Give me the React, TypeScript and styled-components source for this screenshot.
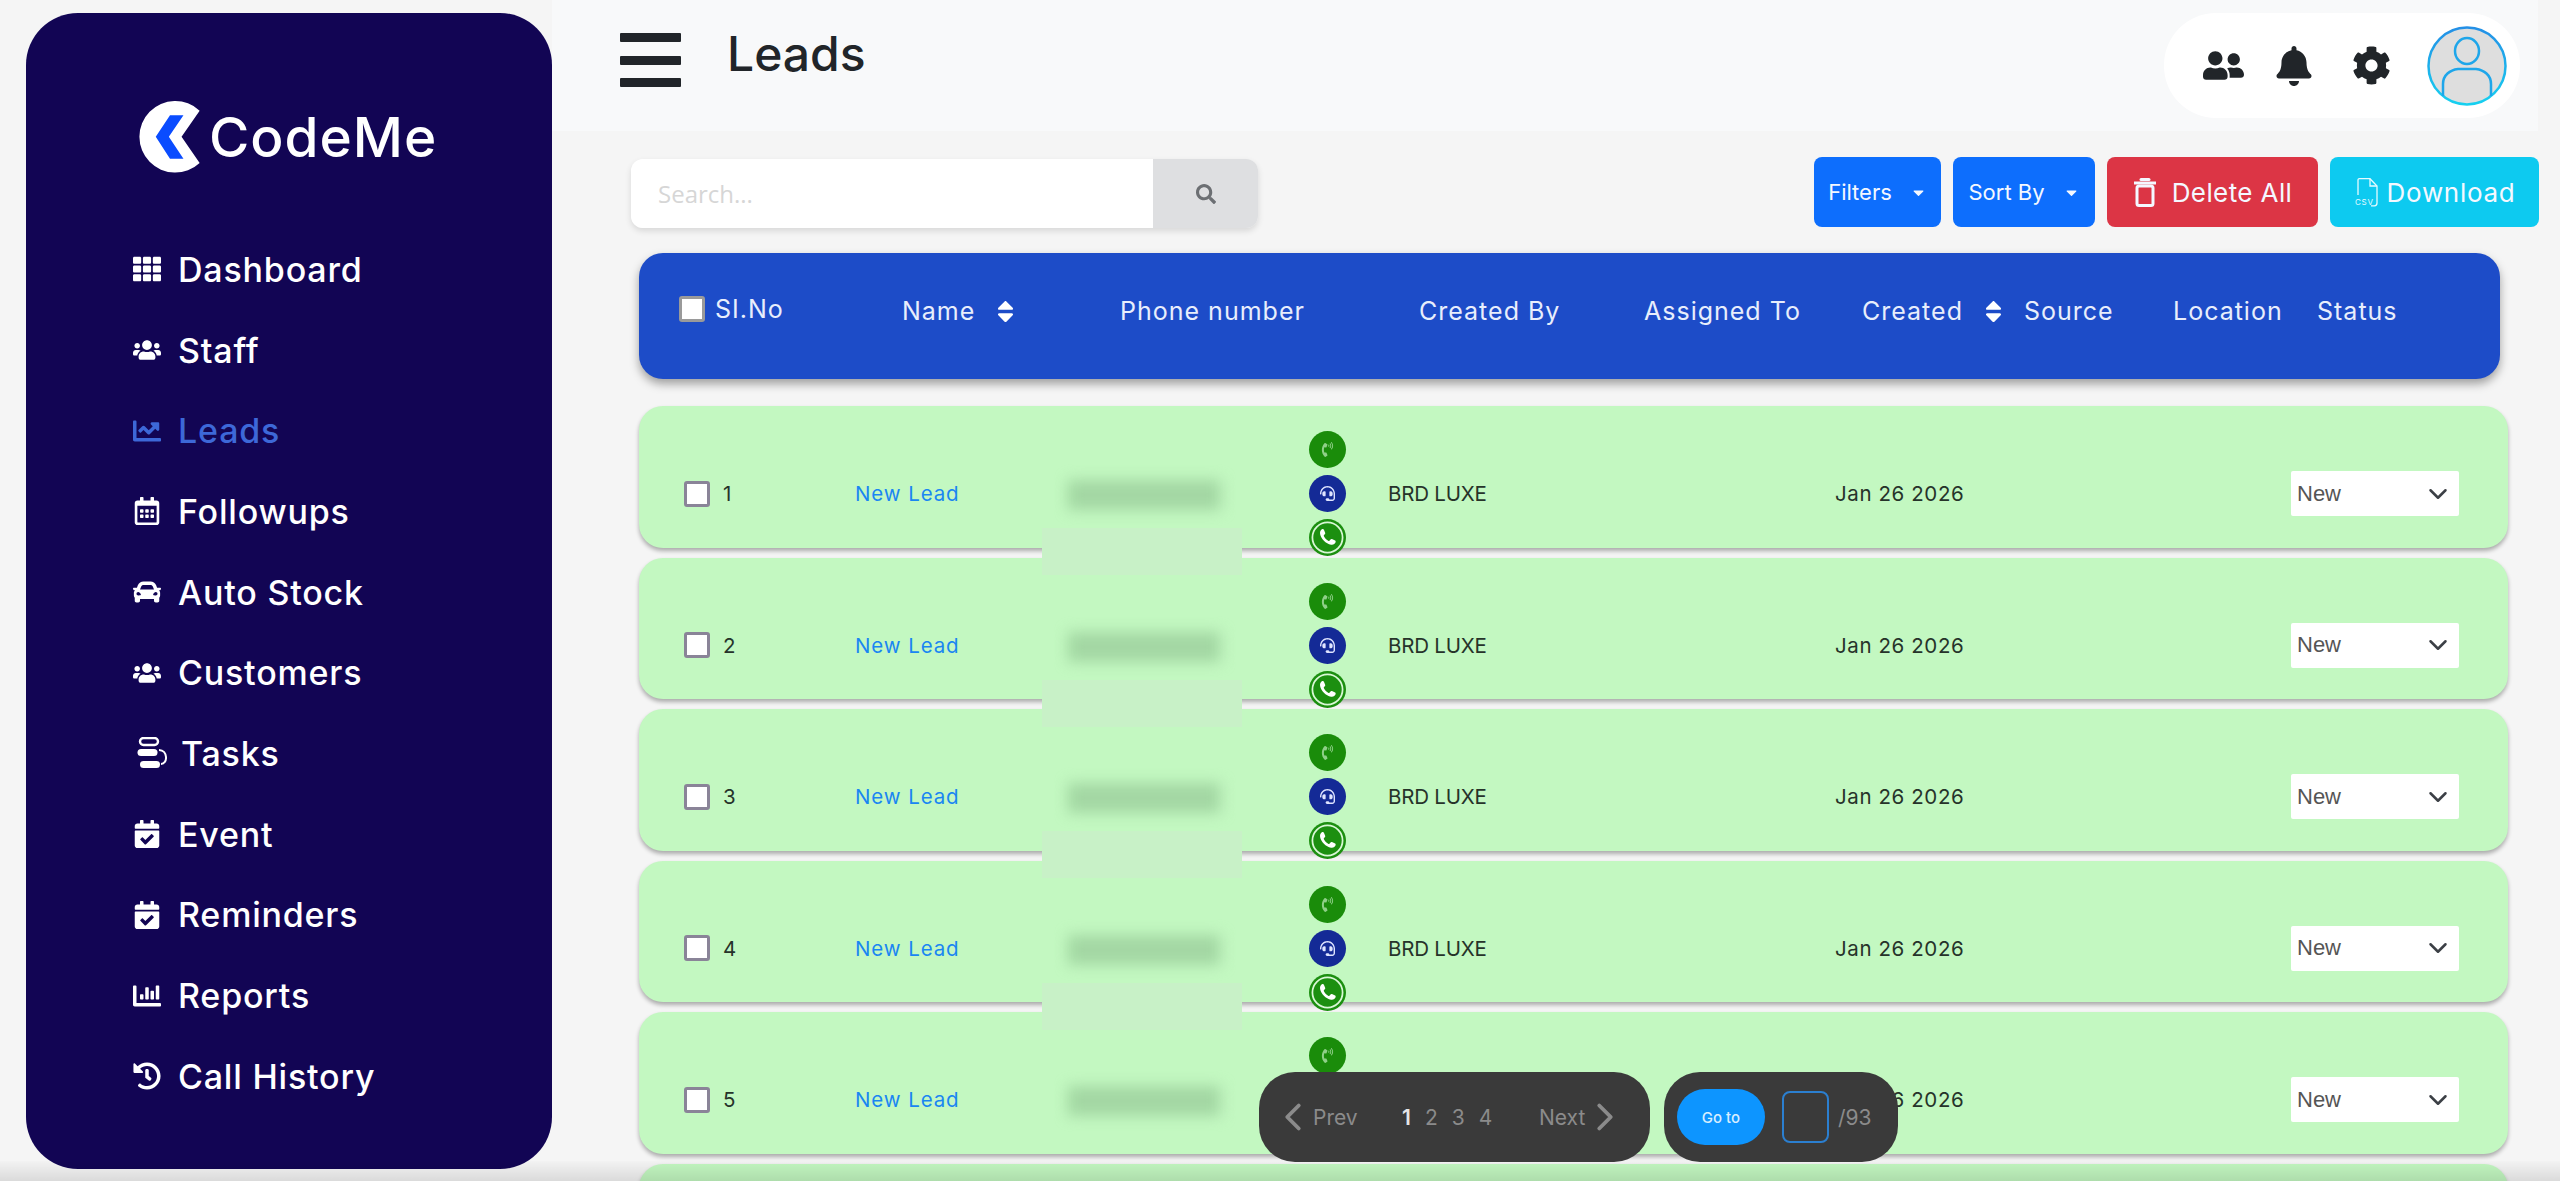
import React from 'react';
import styled, { createGlobalStyle } from 'styled-components';
import {
  FaTh, FaUsers, FaRegCalendarAlt, FaCar, FaCalendarCheck, FaHistory, FaUserFriends, FaBell, FaCog,
  FaSearch, FaSort, FaCaretDown, FaHeadset, FaPhoneVolume, FaChartLine, FaChartBar,
} from 'react-icons/fa';
import { LuChevronLeft, LuChevronRight, LuChevronDown } from 'react-icons/lu';

const UI_FONT = `Inter, "Open Sans", "Liberation Sans", sans-serif`;

const Global = createGlobalStyle`
  html, body { margin: 0; padding: 0; background: #f5f5f5; }
  body { font-family: ${UI_FONT}; }
`;

const Shell = styled.div`
  position: relative;
  display: flex;
  width: 2560px;
  height: 1181px;
  overflow: hidden;
  background: #f5f5f5;
`;

const Sidebar = styled.aside`
  flex: none;
  box-sizing: border-box;
  width: 526px;
  height: 1156px;
  margin: 13px 0 0 26px;
  padding: 88px 0 0 106px;
  background: #120554;
  border-radius: 52px;
`;

const Logo = styled.div`
  display: flex;
  align-items: center;
  gap: 6px;
  height: 72px;
  margin: 0 0 56px 5px;
  color: #fff;
  font-size: 55px;
  font-weight: 500;
  letter-spacing: 1px;
`;

const Nav = styled.nav`
  display: flex;
  flex-direction: column;
`;

const NavItem = styled.div<{ $active?: boolean; $inset?: number }>`
  display: flex;
  align-items: center;
  height: 80.7px;
  padding-left: ${(p) => p.$inset ?? 0}px;
  color: ${(p) => (p.$active ? '#3d68d8' : '#ffffff')};
  font-size: 34px;
  font-weight: 500;
  letter-spacing: 0.8px;
`;

const NavIcon = styled.span<{ $gap?: number }>`
  display: flex;
  align-items: center;
  justify-content: center;
  width: 30px;
  margin-right: ${(p) => p.$gap ?? 16}px;
  font-size: 28px;
`;

const Main = styled.main`
  flex: 1;
  min-width: 0;
`;

const Topbar = styled.header`
  display: flex;
  align-items: flex-start;
  box-sizing: border-box;
  width: 1986px;
  height: 131px;
  padding: 13px 18px 0 68px;
  background: #f8f9fa;
`;

const Hamburger = styled.div`
  display: flex;
  flex-direction: column;
  justify-content: space-between;
  width: 61px;
  height: 54px;
  margin-top: 20px;
`;

const HamburgerBar = styled.span`
  height: 9px;
  border-radius: 1px;
  background: #212529;
`;

const PageTitle = styled.h1`
  margin: 3px 0 0 46px;
  color: #212529;
  font-size: 48px;
  font-weight: 500;
  line-height: 76px;
`;

const UserPill = styled.div`
  display: flex;
  align-items: center;
  box-sizing: border-box;
  width: 356px;
  height: 105px;
  margin-left: auto;
  padding-left: 39px;
  background: #fff;
  border-radius: 52px;
  color: #212529;
`;

const UserIcon = styled.span<{ $size: number; $gap: number }>`
  display: flex;
  margin-right: ${(p) => p.$gap}px;
  font-size: ${(p) => p.$size}px;
`;

const Avatar = styled.span`
  display: flex;
`;

const Toolbar = styled.div`
  display: flex;
  align-items: flex-start;
  box-sizing: border-box;
  width: 1987px;
  height: 70px;
  margin-top: 26px;
  padding-left: 79px;
  gap: 12px;
`;

const SearchBox = styled.div`
  display: flex;
  width: 627px;
  height: 69px;
  margin: 2px auto 0 0;
  border-radius: 12px;
  overflow: hidden;
  box-shadow: 0 3px 6px rgba(0, 0, 0, 0.12);
`;

const SearchInput = styled.div`
  display: flex;
  align-items: center;
  box-sizing: border-box;
  width: 522px;
  padding-left: 27px;
  background: #fff;
  color: #d6d6d6;
  font-family: "Open Sans", sans-serif;
  font-size: 24px;
`;

const SearchButton = styled.div`
  display: flex;
  flex: 1;
  align-items: center;
  justify-content: center;
  background: #dedfe1;
  color: #6c6f73;
  font-size: 20px;
`;

const ActionButton = styled.button<{ $bg: string; $w: number; $size: number; $track?: number; $gap?: number }>`
  display: flex;
  align-items: center;
  justify-content: center;
  gap: ${(p) => p.$gap ?? 0}px;
  box-sizing: border-box;
  width: ${(p) => p.$w}px;
  height: 70px;
  padding: 0;
  border: none;
  border-radius: 8px;
  background: ${(p) => p.$bg};
  color: #f4f8ff;
  font-family: ${UI_FONT};
  font-size: ${(p) => p.$size}px;
  letter-spacing: ${(p) => p.$track ?? 0}px;
`;

const Caret = styled.span`
  display: flex;
  margin-left: 18px;
  font-size: 17px;
`;

const TableHead = styled.div`
  display: grid;
  grid-template-columns: 223px 218px 299px 225px 218px 162px 149px 144px 1fr;
  align-items: center;
  box-sizing: border-box;
  width: 1861px;
  height: 126px;
  margin: 26px 0 0 87px;
  padding: 0 0 10px 40px;
  border-radius: 24px;
  background: #1d4cc8;
  box-shadow: 0 5px 10px rgba(0, 0, 0, 0.35);
  color: #e8eefc;
  font-size: 25px;
  letter-spacing: 1px;
`;

const HeadCell = styled.div<{ $lift?: number }>`
  display: flex;
  align-items: center;
  white-space: nowrap;
  margin-top: ${(p) => -(p.$lift ?? 0)}px;
`;

const SortMark = styled.span`
  display: flex;
  margin-left: 17px;
  font-size: 27px;
  color: #fff;
`;

const Check = styled.span<{ $head?: boolean }>`
  flex: none;
  box-sizing: border-box;
  display: block;
  width: 26px;
  height: 26px;
  margin-right: ${(p) => (p.$head ? 10 : 13)}px;
  border: 3px solid ${(p) => (p.$head ? '#9a9a9a' : '#8a8498')};
  border-radius: 3px;
  background: #fff;
`;

const Rows = styled.div`
  display: flex;
  flex-direction: column;
  gap: 10px;
  width: 1869px;
  margin: 27px 0 0 87px;
`;

const Row = styled.div`
  position: relative;
  display: grid;
  flex: none;
  grid-template-columns: 171px 454px 79px 447px 456px 1fr;
  align-items: center;
  box-sizing: border-box;
  height: 141.5px;
  padding: 25px 0 0 45px;
  border-radius: 24px;
  background: #c3f8c1;
  box-shadow: 0 3px 4px rgba(0, 0, 0, 0.3);
  color: #26332a;
  font-size: 20.5px;
`;

const RowCell = styled.div<{ $track?: number }>`
  display: flex;
  align-items: center;
  white-space: nowrap;
  letter-spacing: ${(p) => p.$track ?? 0}px;
`;

const LeadLink = styled.span`
  color: #1a86f2;
  letter-spacing: 0.9px;
`;

const RedactGlow = styled.div`
  position: absolute;
  left: 403px;
  top: 122px;
  z-index: 2;
  width: 200px;
  height: 47px;
  background: #c8f1c7;
`;

const RedactBlur = styled.div`
  position: absolute;
  left: 430px;
  top: 74px;
  width: 152px;
  height: 30px;
  background: repeating-linear-gradient(90deg, #98d098 0 8px, #b0e0b0 8px 15px);
  filter: blur(7px);
`;

const ContactStack = styled.div`
  display: flex;
  flex-direction: column;
  gap: 7px;
  width: 37px;
`;

const ContactDot = styled.span<{ $bg: string; $size: number; $tint?: string }>`
  display: flex;
  align-items: center;
  justify-content: center;
  box-sizing: border-box;
  width: 37px;
  height: 37px;
  border-radius: 50%;
  background: ${(p) => p.$bg};
  color: ${(p) => p.$tint ?? '#fff'};
  font-size: ${(p) => p.$size}px;
`;

const StatusSelect = styled.div`
  display: flex;
  align-items: center;
  justify-content: space-between;
  box-sizing: border-box;
  width: 168px;
  height: 45px;
  padding: 0 6px 0 6px;
  border-radius: 2px;
  background: #fff;
  color: #555;
  font-family: "Liberation Sans", sans-serif;
  font-size: 22px;
`;

const Chevron = styled.span`
  display: flex;
  font-size: 30px;
  color: #3c4046;
`;

const PagerWrap = styled.div`
  position: absolute;
  left: 1259px;
  top: 1072px;
  z-index: 5;
  display: flex;
  gap: 14px;
`;

const PagerPill = styled.div<{ $w: number }>`
  display: flex;
  align-items: center;
  box-sizing: border-box;
  width: ${(p) => p.$w}px;
  height: 90px;
  border-radius: 36px;
  background: #3a3a3a;
  color: #8b8b8b;
  font-size: 21px;
`;

const PagerNav = styled.span<{ $w: number; $inset?: number }>`
  display: flex;
  align-items: center;
  gap: 5px;
  box-sizing: border-box;
  width: ${(p) => p.$w}px;
  padding-left: ${(p) => p.$inset ?? 0}px;
`;

const PagerChevron = styled.span`
  display: flex;
  font-size: 46px;
  margin: 0 -8px;
`;

const PageNumbers = styled.span`
  display: flex;
  gap: 14px;
  width: 137px;
`;

const PageNumber = styled.span<{ $current?: boolean }>`
  color: ${(p) => (p.$current ? '#e6e6e6' : '#8b8b8b')};
  font-weight: ${(p) => (p.$current ? 600 : 400)};
`;

const GoButton = styled.span`
  display: flex;
  align-items: center;
  justify-content: center;
  width: 88px;
  height: 56px;
  margin-left: 13px;
  border-radius: 28px;
  background: #0d95ff;
  color: #d8eeff;
  font-size: 15px;
  font-weight: 500;
`;

const GoInput = styled.span`
  box-sizing: border-box;
  width: 47px;
  height: 52px;
  margin: 0 9px 0 17px;
  border: 2px solid #2b7fd0;
  border-radius: 8px;
`;

const BottomShade = styled.div`
  position: absolute;
  left: 0;
  right: 0;
  bottom: 0;
  z-index: 4;
  height: 20px;
  background: linear-gradient(rgba(0, 0, 0, 0.01), rgba(0, 0, 0, 0.11));
`;

const LogoMark = () => (
  <svg width="66" height="72" viewBox="0 0 160 187" aria-hidden="true">
    <path d="M157 25 A93 93 0 1 0 157 161 L110 93 Z" fill="#fff" />
    <path d="M80 37 L115 37 L77 93 L115 150 L80 150 L43 93 Z" fill="#0a4cff" />
  </svg>
);

const TasksIcon = () => (
  <svg width="30" height="32" viewBox="0 0 30 32" fill="none" aria-hidden="true">
    <rect x="3" y="1" width="18" height="7" rx="3.5" stroke="#fff" strokeWidth="2.4" />
    <rect x="0.5" y="12" width="20" height="7" rx="3.5" fill="#fff" />
    <rect x="3" y="24" width="20" height="7" rx="3.5" fill="#fff" />
    <path d="M22 13 C31 13 31 27 24 27" stroke="#fff" strokeWidth="2" />
  </svg>
);

const TrashIcon = () => (
  <svg width="24" height="30" viewBox="0 0 24 30" fill="none" stroke="#f4f8ff" strokeWidth="3" aria-hidden="true">
    <path d="M8 2.5 H16" strokeLinecap="round" />
    <path d="M1 6 H23" />
    <rect x="4" y="9" width="16" height="19.5" rx="2" />
  </svg>
);

const CsvFileIcon = () => (
  <svg width="25" height="29" viewBox="0 0 25 29" fill="none" stroke="#e6fbff" strokeWidth="1.3" aria-hidden="true">
    <path d="M4 17 V2 C4 1.2 4.6 .7 5.4 .7 H16 L23 8 V25 C23 26.8 22 27.8 20.4 27.8 H17" />
    <path d="M16 .7 V8 H23" />
    <text x="1" y="27" fontSize="8" fontFamily="Inter, sans-serif" fill="#e6fbff" stroke="none">CSV</text>
  </svg>
);

const WhatsAppBadge = () => (
  <svg width="37" height="37" viewBox="0 0 38 38" aria-hidden="true">
    <circle cx="19" cy="19" r="19" fill="#1c8f10" />
    <circle cx="19" cy="19" r="15.5" fill="#1c8f10" stroke="#d9f7d6" strokeWidth="1.8" />
    <path
      d="M13.2 10.6 C12 11.4 11 13 11.4 15.4 C12.2 20 17.4 25.6 22.6 26.4 C25 26.8 26.6 25.6 27.2 24.2 C27.6 23.2 27.4 22.6 26.8 22.2 L23.6 20.6 C23 20.3 22.5 20.5 22.1 21 L21 22.3 C20.6 22.7 20.2 22.7 19.7 22.4 C17.6 21.2 16.2 19.6 15.3 17.8 C15 17.2 15.1 16.9 15.5 16.5 L16.4 15.4 C16.8 15 16.8 14.5 16.6 14 L15.2 10.9 C14.8 10.2 14 10.1 13.2 10.6 Z"
      fill="#fff"
    />
  </svg>
);

const AvatarArt = () => (
  <svg width="80" height="80" viewBox="0 0 80 80" fill="none" aria-hidden="true">
    <defs>
      <linearGradient id="avatarRing" x1="0" y1="0" x2="0" y2="1">
        <stop offset="0" stopColor="#2490e6" />
        <stop offset="1" stopColor="#16d0f0" />
      </linearGradient>
    </defs>
    <circle cx="40" cy="40" r="38.5" fill="#dedede" stroke="url(#avatarRing)" strokeWidth="2.5" />
    <ellipse cx="40" cy="25" rx="12" ry="13" stroke="#1ea6ea" strokeWidth="2.5" />
    <path d="M16 70 V58 C16 49 23 44 31 43 H49 C57 44 64 49 64 58 V70" stroke="#1ea6ea" strokeWidth="2.5" />
  </svg>
);

const menu = [
  { label: 'Dashboard', icon: <FaTh /> },
  { label: 'Staff', icon: <FaUsers /> },
  { label: 'Leads', icon: <FaChartLine />, active: true },
  { label: 'Followups', icon: <FaRegCalendarAlt /> },
  { label: 'Auto Stock', icon: <FaCar /> },
  { label: 'Customers', icon: <FaUsers /> },
  { label: 'Tasks', icon: <TasksIcon />, inset: 5, gap: 14 },
  { label: 'Event', icon: <FaCalendarCheck /> },
  { label: 'Reminders', icon: <FaCalendarCheck /> },
  { label: 'Reports', icon: <FaChartBar /> },
  { label: 'Call History', icon: <FaHistory /> },
];

const rows = [1, 2, 3, 4, 5];

export default function App() {
  return (
    <Shell>
      <Global />
      <Sidebar>
        <Logo>
          <LogoMark />
          CodeMe
        </Logo>
        <Nav>
          {menu.map((m) => (
            <NavItem key={m.label} $active={m.active} $inset={m.inset}>
              <NavIcon $gap={m.gap}>{m.icon}</NavIcon>
              {m.label}
            </NavItem>
          ))}
        </Nav>
      </Sidebar>
      <Main>
        <Topbar>
          <Hamburger>
            <HamburgerBar />
            <HamburgerBar />
            <HamburgerBar />
          </Hamburger>
          <PageTitle>Leads</PageTitle>
          <UserPill>
            <UserIcon $size={41} $gap={30}><FaUserFriends /></UserIcon>
            <UserIcon $size={40} $gap={38}><FaBell /></UserIcon>
            <UserIcon $size={39} $gap={36}><FaCog /></UserIcon>
            <Avatar><AvatarArt /></Avatar>
          </UserPill>
        </Topbar>
        <Toolbar>
          <SearchBox>
            <SearchInput>Search...</SearchInput>
            <SearchButton><FaSearch /></SearchButton>
          </SearchBox>
          <ActionButton $bg="#0d6efd" $w={127} $size={22}>
            Filters<Caret><FaCaretDown /></Caret>
          </ActionButton>
          <ActionButton $bg="#0d6efd" $w={142} $size={22}>
            Sort By<Caret><FaCaretDown /></Caret>
          </ActionButton>
          <ActionButton $bg="#dc3545" $w={211} $size={26} $track={0.4} $gap={15}>
            <TrashIcon />Delete All
          </ActionButton>
          <ActionButton $bg="#0dcaf0" $w={209} $size={26} $track={0.7} $gap={8}>
            <CsvFileIcon />Download
          </ActionButton>
        </Toolbar>
        <TableHead>
          <HeadCell $lift={4}><Check $head />SI.No</HeadCell>
          <HeadCell>Name<SortMark><FaSort /></SortMark></HeadCell>
          <HeadCell>Phone number</HeadCell>
          <HeadCell>Created By</HeadCell>
          <HeadCell>Assigned To</HeadCell>
          <HeadCell>Created<SortMark><FaSort /></SortMark></HeadCell>
          <HeadCell>Source</HeadCell>
          <HeadCell>Location</HeadCell>
          <HeadCell>Status</HeadCell>
        </TableHead>
        <Rows>
          {rows.map((n) => (
            <Row key={n}>
              <RowCell><Check />{n}</RowCell>
              <RowCell><LeadLink>New Lead</LeadLink></RowCell>
              <ContactStack>
                <ContactDot $bg="#1a8c0a" $size={15} $tint="#8fcf88"><FaPhoneVolume /></ContactDot>
                <ContactDot $bg="#142a96" $size={15} $tint="#dfe4ff"><FaHeadset /></ContactDot>
                <WhatsAppBadge />
              </ContactStack>
              <RowCell $track={-0.2}>BRD LUXE</RowCell>
              <RowCell $track={0.6}>Jan 26 2026</RowCell>
              <StatusSelect>New<Chevron><LuChevronDown /></Chevron></StatusSelect>
              <RedactBlur />
              {n < rows.length && <RedactGlow />}
            </Row>
          ))}
          <Row />
        </Rows>
      </Main>
      <PagerWrap>
        <PagerPill $w={391}>
          <PagerNav $w={143} $inset={19}>
            <PagerChevron><LuChevronLeft /></PagerChevron>Prev
          </PagerNav>
          <PageNumbers>
            <PageNumber $current>1</PageNumber>
            <PageNumber>2</PageNumber>
            <PageNumber>3</PageNumber>
            <PageNumber>4</PageNumber>
          </PageNumbers>
          <PagerNav $w={90}>
            Next<PagerChevron><LuChevronRight /></PagerChevron>
          </PagerNav>
        </PagerPill>
        <PagerPill $w={234}>
          <GoButton>Go to</GoButton>
          <GoInput />
          /93
        </PagerPill>
      </PagerWrap>
      <BottomShade />
    </Shell>
  );
}
